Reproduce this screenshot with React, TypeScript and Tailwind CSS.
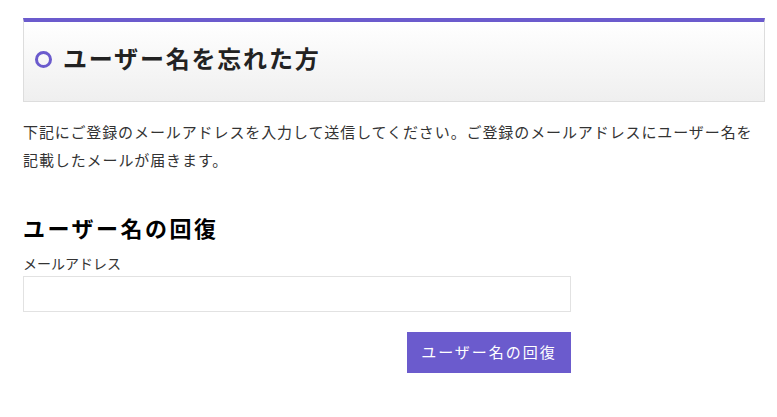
export default function App() {
  return (
    <div
      className="min-h-screen bg-white pt-[18px] text-[#333]"
      style={{ fontFamily: '"Noto Sans CJK JP", "Noto Sans", sans-serif' }}
    >
      <div className="ml-[23px] w-[742px]">
        {/* Page title */}
        <div className="flex h-[84px] items-center border-x border-b border-t-4 border-[#ddd] border-t-[#6b5bcd] bg-gradient-to-b from-white to-[#efefef] pl-[11px]">
          <span className="-mt-[4px] mr-[11px] block h-[17px] w-[17px] rounded-full border-[3px] border-[#6b5bcd]" />
          <h1 className="-mt-[8px] text-[24px] font-bold leading-none tracking-[1.8px] text-[#222]">
            ユーザー名を忘れた方
          </h1>
        </div>

        <p className="mt-[16px] text-[15px] leading-[28px] tracking-[0.9px]">
          下記にご登録のメールアドレスを入力して送信してください。ご登録のメールアドレスにユーザー名を記載したメールが届きます。
        </p>

        <div className="mt-[38px] flex w-[548px] flex-col">
          <h2 className="text-[22px] font-bold leading-[30px] tracking-[2.5px] text-black">
            ユーザー名の回復
          </h2>
          <label className="mt-[11px] text-[14px] leading-[20px] text-[#333]">
            メールアドレス
          </label>
          <input
            type="email"
            className="mt-[3px] h-[36px] w-full border border-[#e2e2e2] bg-white px-2 outline-none"
          />
          <button className="mt-[20px] h-[41px] w-[164px] self-end bg-[#6b5bcd] text-[15px] tracking-[2px] text-white">
            ユーザー名の回復
          </button>
        </div>
      </div>
    </div>
  );
}
